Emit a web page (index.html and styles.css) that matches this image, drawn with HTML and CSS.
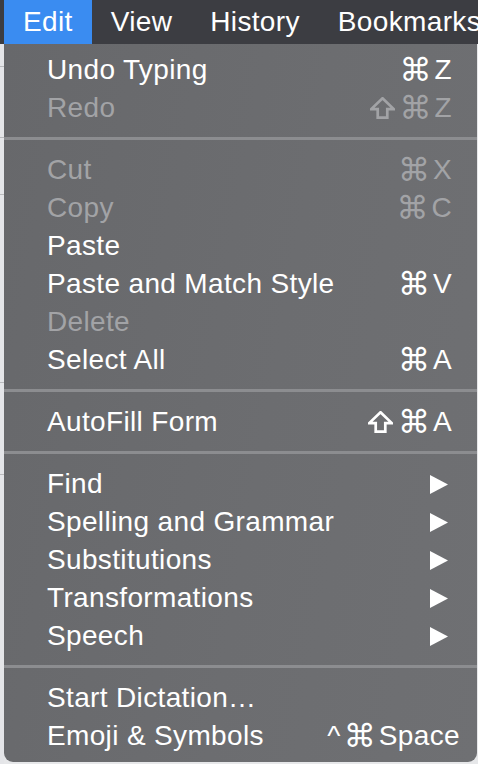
FILE: index.html
```html
<!DOCTYPE html>
<html lang="en">
<head>
<meta charset="utf-8">
<title>Edit menu</title>
<link rel="stylesheet" href="styles.css">
</head>
<body>
<div class="screen">
  <nav class="menubar">
    <span class="mb-item active">Edit</span>
    <span class="mb-item">View</span>
    <span class="mb-item">History</span>
    <span class="mb-item">Bookmarks</span>
  </nav>
  <div class="below">
    <div class="page-edge">
      <span class="edge-line l1"></span>
      <span class="edge-line l2"></span>
      <span class="edge-line l3"></span>
      <span class="edge-line l4"></span>
      <span class="edge-line l5"></span>
    </div>
    <div class="menu">
      <div class="row"><span>Undo Typing</span><span class="keys"><span class="cmd">⌘</span><span>Z</span></span></div>
      <div class="row off"><span>Redo</span><span class="keys"><svg class="shift" viewBox="0 0 24 21"><path d="M12 1.2 L22.8 11.6 H16.6 V19.8 H7.4 V11.6 H1.2 Z"/></svg><span class="cmd">⌘</span><span>Z</span></span></div>
      <div class="sep"></div>
      <div class="row off"><span>Cut</span><span class="keys"><span class="cmd">⌘</span><span>X</span></span></div>
      <div class="row off"><span>Copy</span><span class="keys"><span class="cmd">⌘</span><span>C</span></span></div>
      <div class="row"><span>Paste</span></div>
      <div class="row"><span>Paste and Match Style</span><span class="keys"><span class="cmd">⌘</span><span>V</span></span></div>
      <div class="row off"><span>Delete</span></div>
      <div class="row"><span>Select All</span><span class="keys"><span class="cmd">⌘</span><span>A</span></span></div>
      <div class="sep"></div>
      <div class="row"><span>AutoFill Form</span><span class="keys"><svg class="shift" viewBox="0 0 24 21"><path d="M12 1.2 L22.8 11.6 H16.6 V19.8 H7.4 V11.6 H1.2 Z"/></svg><span class="cmd">⌘</span><span>A</span></span></div>
      <div class="sep"></div>
      <div class="row"><span>Find</span><svg class="arrow" viewBox="0 0 18 19"><polygon points="0,0 18,9.5 0,19"/></svg></div>
      <div class="row"><span>Spelling and Grammar</span><svg class="arrow" viewBox="0 0 18 19"><polygon points="0,0 18,9.5 0,19"/></svg></div>
      <div class="row"><span>Substitutions</span><svg class="arrow" viewBox="0 0 18 19"><polygon points="0,0 18,9.5 0,19"/></svg></div>
      <div class="row"><span>Transformations</span><svg class="arrow" viewBox="0 0 18 19"><polygon points="0,0 18,9.5 0,19"/></svg></div>
      <div class="row"><span>Speech</span><svg class="arrow" viewBox="0 0 18 19"><polygon points="0,0 18,9.5 0,19"/></svg></div>
      <div class="sep"></div>
      <div class="row"><span>Start Dictation…</span></div>
      <div class="row"><span>Emoji &amp; Symbols</span><span class="keys wide"><span>^</span><span class="cmd">⌘</span><span>Space</span></span></div>
    </div>
  </div>
</div>
</body>
</html>
```

FILE: styles.css
```css
html, body {
  margin: 0;
  padding: 0;
}

body {
  width: 478px;
  height: 764px;
  overflow: hidden;
  background: #e6e7e9;
  font-family: "Liberation Sans", "DejaVu Sans", sans-serif;
  font-size: 28px;
  color: #ffffff;
  letter-spacing: 0.35px;
}

.screen {
  display: flex;
  flex-direction: column;
  height: 764px;
}

/* top menu bar */
.menubar {
  display: flex;
  height: 44px;
  line-height: 44px;
  padding-left: 4px;
  background: #3c3d42;
  white-space: nowrap;
  overflow: hidden;
  flex: none;
}

.mb-item {
  padding: 0 19px;
}

.mb-item.active {
  background: #3a8cf1;
}

.below {
  display: flex;
  flex: 1;
  min-height: 0;
}

/* sliver of the page behind the menu */
.page-edge {
  width: 4px;
  flex: none;
  position: relative;
  background: #e4e5e8;
}

.edge-line {
  position: absolute;
  left: 0;
  width: 4px;
  height: 1px;
  background: #b9babd;
}
.l1 { top: 22px; }
.l2 { top: 93px; }
.l3 { top: 150px; }
.l4 { top: 338px; }
.l5 { top: 430px; }

/* dropdown panel */
.menu {
  width: 473px;
  height: 718px;
  flex: none;
  box-sizing: border-box;
  padding: 7px 0;
  background: linear-gradient(100deg, #67686b 0%, #6c6d70 55%, #6f7073 100%);
  border-radius: 0 0 9px 9px;
}

.row {
  display: flex;
  justify-content: space-between;
  align-items: center;
  height: 38px;
  line-height: 38px;
  padding: 0 25px 0 43px;
  white-space: nowrap;
}

.row.off {
  color: #a2a3a6;
}

/* keyboard shortcut cluster */
.keys {
  display: flex;
  align-items: center;
  gap: 3px;
}

.keys .cmd {
  font-family: "DejaVu Sans", sans-serif;
  font-size: 32px;
  letter-spacing: 0;
}

.keys.wide {
  margin-right: -8px;
}

.shift {
  width: 25px;
  height: 22px;
  margin-right: 2px;
  fill: none;
  stroke: currentColor;
  stroke-width: 2.6;
  stroke-linejoin: miter;
}

.arrow {
  width: 18px;
  height: 19px;
  margin-right: 4px;
  fill: #ffffff;
}

.sep {
  height: 3px;
  margin: 10px 0 11px;
  background: #8c8d90;
}
```
